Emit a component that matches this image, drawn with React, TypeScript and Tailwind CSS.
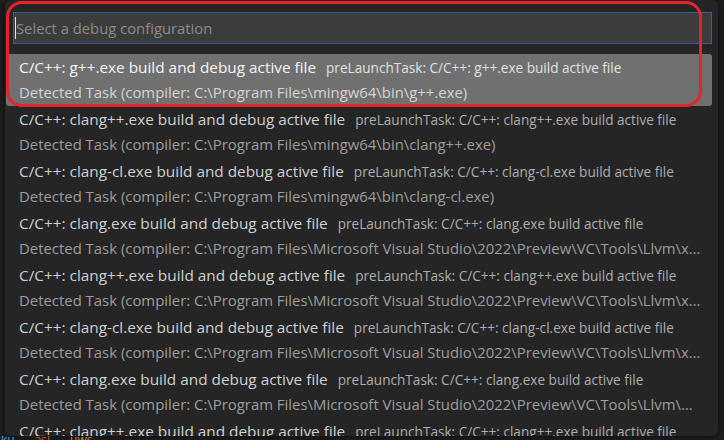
import React from 'react';

type Item = {
  label: string;
  description: string;
  detail: string;
};

const mingw = 'C:\\Program Files\\mingw64\\bin\\';
const llvm = 'C:\\Program Files\\Microsoft Visual Studio\\2022\\Preview\\VC\\Tools\\Llvm\\';

const items: Item[] = [
  { label: 'g++.exe', description: 'g++.exe', detail: mingw + 'g++.exe)' },
  { label: 'clang++.exe', description: 'clang++.exe', detail: mingw + 'clang++.exe)' },
  { label: 'clang-cl.exe', description: 'clang-cl.exe', detail: mingw + 'clang-cl.exe)' },
  { label: 'clang.exe', description: 'clang.exe', detail: llvm + 'x64\\bin\\clang.exe)' },
  { label: 'clang++.exe', description: 'clang++.exe', detail: llvm + 'x64\\bin\\clang++.exe)' },
  { label: 'clang-cl.exe', description: 'clang-cl.exe', detail: llvm + 'x64\\bin\\clang-cl.exe)' },
  { label: 'clang.exe', description: 'clang.exe', detail: llvm + 'bin\\clang.exe)' },
  { label: 'clang++.exe', description: 'clang++.exe', detail: llvm + 'bin\\clang++.exe)' },
];

const Row = ({ item, selected }: { item: Item; selected: boolean }) => {
  return (
    <div
      className={
        selected
          ? 'h-[52px] rounded-[3px] bg-[#707070] pl-[13px] pr-[11px] pt-[2px]'
          : 'h-[52px] pl-[13px] pr-[11px] pt-[2px]'
      }
    >
      <div className="flex h-[24px] items-center gap-[10px] whitespace-nowrap">
        <span className={selected ? 'text-[15.35px] text-[#f6f6f6]' : 'text-[15.35px] text-[#d0d0d0]'}>
          C/C++: {item.label} build and debug active file
        </span>
        <span className={selected ? 'text-[13.6px] text-[#e0e0e0]' : 'text-[13.6px] text-[#adadad]'}>
          preLaunchTask: C/C++: {item.description} build active file
        </span>
      </div>
      <div
        className={
          selected
            ? 'h-[24px] truncate text-[14.9px] leading-[24px] text-[#d4d4d4]'
            : 'h-[24px] truncate text-[14.9px] leading-[24px] text-[#9d9d9d]'
        }
      >
        Detected Task (compiler: {item.detail}
      </div>
    </div>
  );
};

const App = () => {
  return (
    <div className="relative h-[440px] w-[724px] overflow-hidden bg-[#1e1e1e] font-['Open_Sans','Noto_Sans',sans-serif]">
      <div className="ml-[5px] h-[436px] w-[713px] overflow-hidden rounded-[6px] bg-[#252526] pl-[1px] pr-[6px] shadow-[0_0_8px_rgba(0,0,0,0.6)]">
        <div className="pl-[7px] pt-[12px] pb-[10px]">
          <div className="flex h-[32px] items-center border border-[#3d5a9e] bg-[#3c3c3c]">
            <span className="ml-[1px] h-[22px] w-px bg-[#e8e8e8]" />
            <span className="text-[14.8px] text-[#8b8b8b]">Select a debug configuration</span>
          </div>
        </div>
        <div>
          {items.map((item, i) => (
            <Row key={i} item={item} selected={i === 0} />
          ))}
        </div>
      </div>

      <div className="flex h-[4px] items-start gap-[20px] overflow-hidden pl-[1px] text-[12px] leading-[8px]">
        <span className="text-[#4fa0e0]">ku</span>
        <span className="text-[#d0572f]">asl</span>
        <span className="text-[#c6893a]">uws</span>
      </div>

      <div className="pointer-events-none absolute left-[6px] top-[1px] h-[106px] w-[696px] rounded-[16px] border-[3px] border-[#e5232a]" />
    </div>
  );
};

export default App;
